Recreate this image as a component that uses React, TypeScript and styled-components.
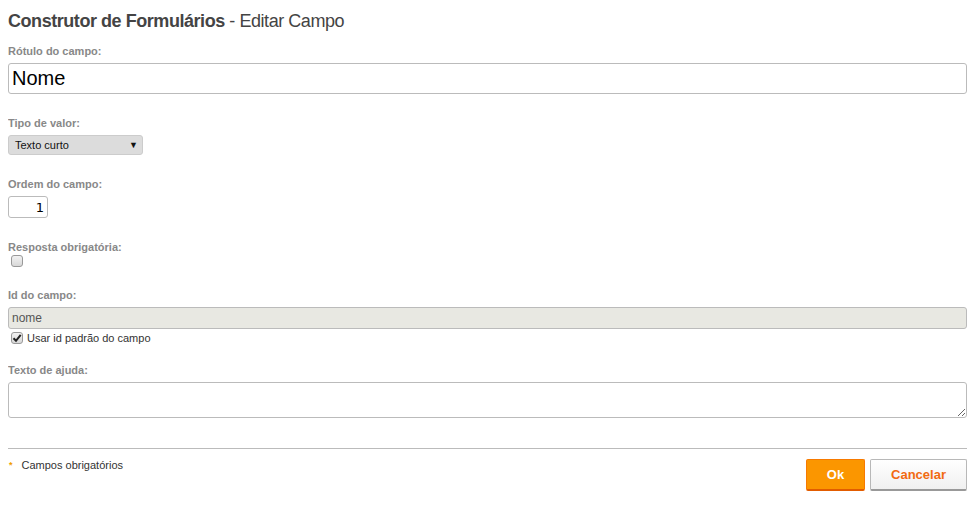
import styled, { createGlobalStyle } from "styled-components";

const Global = createGlobalStyle`
  body {
    margin: 8px;
    font-family: "Liberation Sans", Arial, sans-serif;
    color: #333;
    background: #fff;
  }
`;

const Title = styled.h1`
  margin: 1px 0 12px 0;
  font-size: 18px;
  line-height: 24px;
  font-weight: normal;
  color: #444;
  letter-spacing: -0.45px;

  strong {
    font-weight: bold;
  }
`;

const Field = styled.div<{ $gap?: number }>`
  margin-bottom: ${(p) => p.$gap ?? 23}px;
`;

const Label = styled.label`
  display: block;
  font-size: 11px;
  line-height: 13px;
  font-weight: bold;
  color: #888;
  margin-bottom: 5px;
`;

const TextInput = styled.input<{ $big?: boolean; $readonly?: boolean }>`
  box-sizing: border-box;
  display: block;
  width: 100%;
  height: ${(p) => (p.$big ? 31 : 22)}px;
  padding: 0 3px;
  border: 1px solid #bbb;
  border-radius: 3px;
  font-family: "Liberation Sans", Arial, sans-serif;
  font-size: ${(p) => (p.$big ? 20 : 12)}px;
  color: ${(p) => (p.$readonly ? "#555" : "#000")};
  background: ${(p) => (p.$readonly ? "#e8e8e2" : "#fff")};
  outline: none;
`;

const NumberInput = styled.input`
  box-sizing: border-box;
  display: block;
  width: 40px;
  height: 22px;
  padding: 0 3px;
  border: 1px solid #bbb;
  border-radius: 3px;
  text-align: right;
  font-family: "DejaVu Sans", sans-serif;
  font-size: 13px;
  color: #000;
`;

const Select = styled.div`
  box-sizing: border-box;
  display: flex;
  align-items: center;
  justify-content: space-between;
  width: 135px;
  height: 20px;
  padding: 0 4px 0 6px;
  border: 1px solid #ccc;
  border-radius: 3px;
  background: #dcdcdc;
  font-size: 11px;
  color: #111;
`;

const Arrow = styled.span`
  font-size: 9px;
  color: #111;
`;

const CheckRow = styled.div<{ $top?: number }>`
  display: flex;
  align-items: center;
  gap: 4px;
  margin-top: ${(p) => p.$top ?? 3}px;
  padding-left: 3px;
  font-size: 11px;
  color: #333;
`;

const Box = styled.span`
  box-sizing: border-box;
  display: inline-flex;
  align-items: center;
  justify-content: center;
  width: 12px;
  height: 12px;
  border: 1px solid #999;
  border-radius: 3px;
  background: linear-gradient(#f2f2f2, #d8d8d8);
`;

const TextArea = styled.textarea`
  box-sizing: border-box;
  display: block;
  width: 100%;
  height: 36px;
  border: 1px solid #bbb;
  border-radius: 3px;
  font-family: "Liberation Sans", Arial, sans-serif;
  font-size: 12px;
`;

const Rule = styled.hr`
  border: 0;
  border-top: 1px solid #bbb;
  margin: 30px 0 10px 0;
`;

const Footer = styled.div`
  display: flex;
  justify-content: space-between;
  align-items: flex-start;
`;

const Note = styled.div`
  display: flex;
  align-items: center;
  gap: 9px;
  padding-left: 1px;
  font-size: 11px;
  line-height: 13px;
  color: #333;
`;

const Star = styled.span`
  color: #f0a000;
  font-size: 9px;
  font-weight: bold;
`;

const Actions = styled.div`
  display: flex;
  gap: 5px;
`;

const Button = styled.button<{ $primary?: boolean }>`
  box-sizing: border-box;
  height: 32px;
  padding: 0 19px;
  min-width: ${(p) => (p.$primary ? 59 : 97)}px;
  border: 1px solid ${(p) => (p.$primary ? "#f77a00" : "#b8b8b8")};
  border-bottom: 2px solid ${(p) => (p.$primary ? "#e25c00" : "#999")};
  border-radius: 2px;
  background: ${(p) =>
    p.$primary ? "#fb9600" : "linear-gradient(#ffffff, #f0f0f0)"};
  color: ${(p) => (p.$primary ? "#fff" : "#f26a10")};
  font-family: "Liberation Sans", Arial, sans-serif;
  font-size: 13px;
  font-weight: bold;
`;

function Check({ checked }: { checked?: boolean }) {
  return (
    <Box>
      {checked && (
        <svg width="10" height="10" viewBox="0 0 10 10">
          <path d="M1.5 5.2 L4 7.8 L8.7 1.8" fill="none" stroke="#222" strokeWidth="2" />
        </svg>
      )}
    </Box>
  );
}

export default function App() {
  return (
    <>
      <Global />
      <Title>
        <strong>Construtor de Formulários</strong> - Editar Campo
      </Title>

      <Field>
        <Label>Rótulo do campo:</Label>
        <TextInput $big defaultValue="Nome" />
      </Field>

      <Field>
        <Label>Tipo de valor:</Label>
        <Select>
          <span>Texto curto</span>
          <Arrow>▼</Arrow>
        </Select>
      </Field>

      <Field>
        <Label>Ordem do campo:</Label>
        <NumberInput defaultValue="1" />
      </Field>

      <Field $gap={22}>
        <Label>Resposta obrigatória:</Label>
        <CheckRow $top={-4}>
          <Check />
        </CheckRow>
      </Field>

      <Field $gap={20}>
        <Label>Id do campo:</Label>
        <TextInput $readonly readOnly value="nome" />
        <CheckRow>
          <Check checked />
          <span>Usar id padrão do campo</span>
        </CheckRow>
      </Field>

      <Field $gap={0}>
        <Label>Texto de ajuda:</Label>
        <TextArea />
      </Field>

      <Rule />

      <Footer>
        <Note>
          <Star>*</Star>
          <span>Campos obrigatórios</span>
        </Note>
        <Actions>
          <Button $primary>Ok</Button>
          <Button>Cancelar</Button>
        </Actions>
      </Footer>
    </>
  );
}
